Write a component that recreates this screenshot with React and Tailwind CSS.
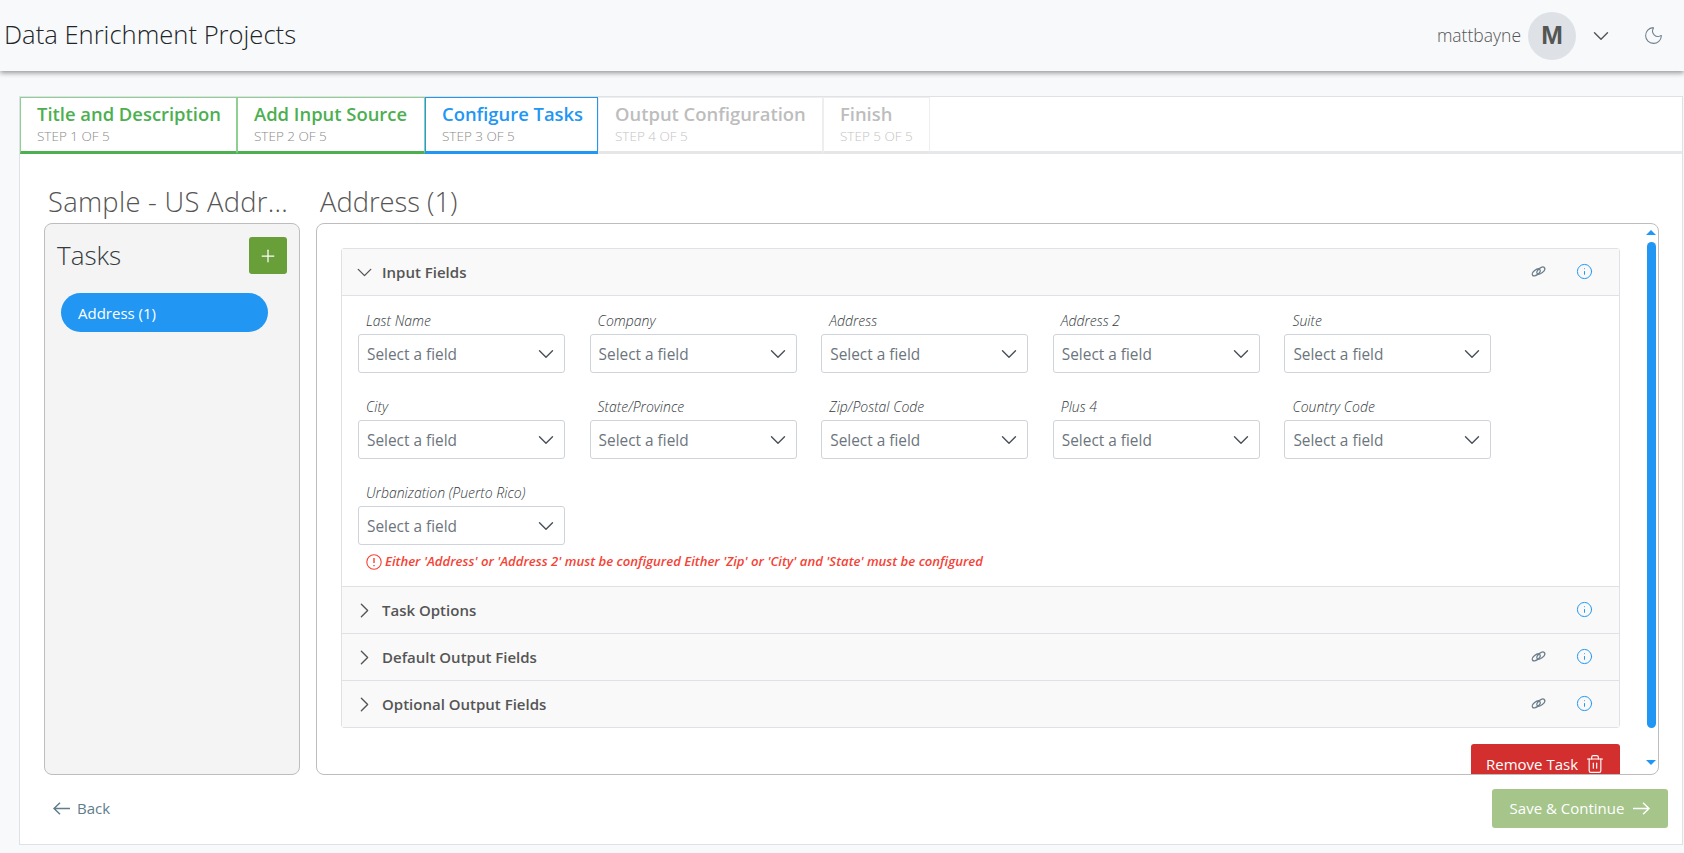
import { ChevronDown, ChevronRight, Info, Moon, Plus, Trash2 } from "lucide-react";

const steps = [
  { title: "Title and Description", sub: "STEP 1 OF 5", w: "w-[217px]", box: "border-[#8fd092] border-b-[#4caf50]", text: "text-[#4caf50]", step: "text-[#8a8a8a]" },
  { title: "Add Input Source", sub: "STEP 2 OF 5", w: "w-[188px]", box: "border-[#8fd092] border-b-[#4caf50]", text: "text-[#4caf50]", step: "text-[#8a8a8a]" },
  { title: "Configure Tasks", sub: "STEP 3 OF 5", w: "w-[173px]", box: "border-[#2196f3]", text: "text-[#2196f3]", step: "text-[#8a8a8a]" },
  { title: "Output Configuration", sub: "STEP 4 OF 5", w: "w-[225px]", box: "border-[#eeeeee] border-b-[#e6e6e6]", text: "text-[#bdbdbd]", step: "text-[#c4c4c4]" },
  { title: "Finish", sub: "STEP 5 OF 5", w: "w-[107px]", box: "border-[#eeeeee] border-b-[#e6e6e6]", text: "text-[#bdbdbd]", step: "text-[#c4c4c4]" },
];

const fields = [
  "Last Name", "Company", "Address", "Address 2", "Suite",
  "City", "State/Province", "Zip/Postal Code", "Plus 4", "Country Code",
  "Urbanization (Puerto Rico)",
];

const sections = [
  { name: "Task Options", link: false },
  { name: "Default Output Fields", link: true },
  { name: "Optional Output Fields", link: true },
];

const LinkIcon = () => (
  <svg viewBox="0 0 15 11" className="h-[11px] w-[15px] text-[#6c7f8c]" fill="none" stroke="currentColor" strokeWidth="1.3">
    <ellipse cx="5.2" cy="6.4" rx="4.6" ry="2.5" transform="rotate(-38 5.2 6.4)" />
    <ellipse cx="9.8" cy="4.6" rx="4.6" ry="2.5" transform="rotate(-38 9.8 4.6)" />
  </svg>
);

const Arrow = ({ left }) => (
  <svg viewBox="0 0 17 13" className="h-[13px] w-[17px]" fill="none" stroke="currentColor" strokeWidth="1.5">
    {left ? <path d="M17 6.5H1M7 .7 1 6.5l6 5.8" /> : <path d="M0 6.5h16M10 .7l6 5.8-6 5.8" />}
  </svg>
);

const HeadIcons = ({ link }) => (
  <div className="ml-auto flex items-center gap-[30px] pr-[26px] pb-px">
    {link && <LinkIcon />}
    <Info size={17} strokeWidth={1.4} className="text-[#2196f3]" />
  </div>
);

const App = () => {
  return (
    <div className="h-[853px] w-full overflow-hidden bg-[#f8f9fa] font-['Open_Sans',sans-serif] text-[#555555]">
      <header className="flex h-[71px] items-center bg-[#f8f9fa] pl-[4px] shadow-[0_2px_5px_rgba(0,0,0,0.4)]">
        <h1 className="text-[25.6px] font-light text-[#212529]">Data Enrichment Projects</h1>
        <div className="ml-auto flex items-center">
          <span className="text-[17.5px] font-light">mattbayne</span>
          <div className="ml-[7px] flex h-[48px] w-[48px] items-center justify-center rounded-full bg-[#dee2e6] font-['Liberation_Sans',sans-serif] text-[26px] font-bold">M</div>
          <ChevronDown size={26} strokeWidth={1.3} className="ml-[12px]" />
          <Moon size={21} strokeWidth={1.2} className="ml-[29px] mr-[20px] text-[#6c7f8c]" />
        </div>
      </header>

      <main className="ml-[19px] mr-px mt-[25px] flex h-[749px] flex-col border border-[#dee2e6] bg-white">
        <nav className="flex h-[57px] shrink-0 border-b-[3px] border-[#e6e8ea]">
          {steps.map((s) => (
            <div key={s.title} className={`h-[57px] shrink-0 border border-b-[3px] pl-[16px] pt-[3px] ${s.w} ${s.box}`}>
              <div className={`whitespace-nowrap text-[18.4px] font-semibold leading-[26px] ${s.text}`}>{s.title}</div>
              <div className={`text-[13.5px] font-light leading-[18px] ${s.step}`}>{s.sub}</div>
            </div>
          ))}
        </nav>

        <div className="flex gap-[16px] pl-[24px] pr-[23px] pt-[27px]">
          <div className="w-[256px] shrink-0">
            <h2 className="h-[42px] whitespace-nowrap pl-[4px] text-[27.3px] font-light leading-[42px] tracking-[0.3px]">Sample - US Addr...</h2>
            <aside className="h-[552px] rounded-[8px] border border-[#bdbdbd] bg-[#f4f4f4] pl-[12px] pr-[12px] pt-[12px]">
              <div className="flex items-center justify-between">
                <span className="text-[26px] font-light text-[#343a40]">Tasks</span>
                <button className="flex h-[37px] w-[38px] items-center justify-center rounded-[3px] bg-[#689f38] text-white">
                  <Plus size={20} strokeWidth={1.5} />
                </button>
              </div>
              <div className="ml-[4px] mt-[18px] flex h-[39px] w-[207px] items-center rounded-full bg-[#2196f3] pl-[17px] pt-px text-[15px] text-white">Address (1)</div>
            </aside>
          </div>

          <div className="min-w-0 flex-1">
            <h2 className="h-[42px] pl-[4px] text-[27.3px] font-light leading-[42px]">Address (1)</h2>
            <section className="relative h-[552px] overflow-hidden rounded-[8px] border border-[#bdbdbd] bg-white pl-[24px] pr-[38px] pt-[24px]">
              <div className="rounded-[3px] border border-[#dee2e6]">
                <div className="flex h-[46px] items-center bg-[#f9f9f9] pl-[10px]">
                  <ChevronDown size={25} strokeWidth={1.3} />
                  <span className="ml-[5px] text-[15px] font-semibold">Input Fields</span>
                  <HeadIcons link />
                </div>
                <div className="border-t border-[#dee2e6] pb-[15px] pl-[16px] pt-[15px]">
                  <div className="grid grid-cols-[repeat(5,207px)] gap-x-[24.6px] gap-y-[24px]">
                    {fields.map((f) => (
                      <div key={f}>
                        <div className="h-[20px] whitespace-nowrap pl-[8px] text-[14px] font-light italic leading-[20px] text-[#343a40]">{f}</div>
                        <div className="mt-[3px] flex h-[39px] items-center justify-between rounded-[3px] border border-[#ced4da] pl-[8px] pr-[5px] text-[15.4px] text-[#6c757d]">
                          <span className="pt-[2px]">Select a field</span>
                          <ChevronDown size={26} strokeWidth={1.3} className="text-[#495057]" />
                        </div>
                      </div>
                    ))}
                  </div>
                  <div className="mt-[8px] flex h-[18px] items-center pl-[8px] text-[13.15px] font-semibold italic text-[#f44336]">
                    <svg viewBox="0 0 16 16" className="mr-[3px] h-[16px] w-[16px] shrink-0" fill="none" stroke="currentColor" strokeWidth="1.1">
                      <circle cx="8" cy="8" r="7.2" />
                      <path d="M8 4v5M8 11v1.2" strokeWidth="1.4" />
                    </svg>
                    <span className="whitespace-nowrap">Either 'Address' or 'Address 2' must be configured Either 'Zip' or 'City' and 'State' must be configured</span>
                  </div>
                </div>
                {sections.map((s) => (
                  <div key={s.name} className="flex h-[47px] items-center border-t border-[#dee2e6] bg-[#f9f9f9] pl-[10px]">
                    <ChevronRight size={25} strokeWidth={1.3} />
                    <span className="ml-[5px] text-[15px] font-semibold">{s.name}</span>
                    <HeadIcons link={s.link} />
                  </div>
                ))}
              </div>
              <div className="mt-[16px] flex justify-end">
                <button className="flex h-[40px] w-[149px] shrink-0 items-center justify-center gap-[7px] rounded-[3px] bg-[#d32f2f] text-[15px] text-white">
                  Remove Task
                  <Trash2 size={20} strokeWidth={1.4} />
                </button>
              </div>

              {/* fake scrollbar, sits over the panel edge */}
              <div className="absolute right-[2px] top-0 flex h-full w-[10px] flex-col items-center">
                <div className="mt-[6px] h-0 w-0 border-x-[5px] border-b-[5px] border-x-transparent border-b-[#2196f3]" />
                <div className="mt-[7px] h-[486px] w-[9px] rounded-full bg-[#2196f3]" />
                <div className="mt-[32px] h-0 w-0 border-x-[5px] border-t-[5px] border-x-transparent border-t-[#2196f3]" />
              </div>
            </section>
          </div>
        </div>

        <div className="flex items-center justify-between pl-[33px] pr-[14px] pt-[14px]">
          <div className="flex items-center gap-[7px] text-[15px] text-[#607d8b]">
            <Arrow left />
            Back
          </div>
          <button className="flex h-[39px] w-[176px] items-center justify-center gap-[9px] rounded-[3px] bg-[#a5c58a] text-[15px] text-white">
            Save &amp; Continue
            <Arrow />
          </button>
        </div>
      </main>
    </div>
  );
};

export default App;
